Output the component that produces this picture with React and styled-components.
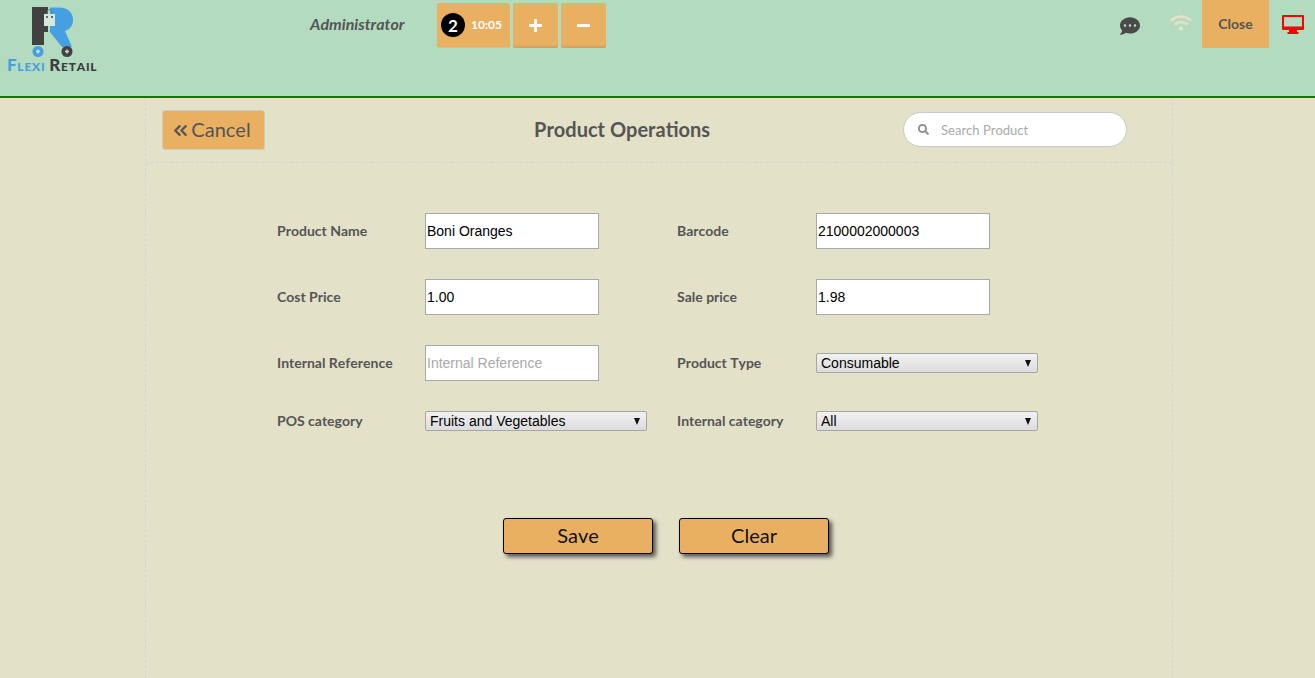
import React from 'react';
import styled, {createGlobalStyle} from 'styled-components';
import {FaCommentDots, FaMinus, FaPlus, FaSearch, FaWifi} from 'react-icons/fa';
import {ChevronsLeft} from 'lucide-react';

const GlobalStyle = createGlobalStyle`
    html, body {
        margin: 0;
        height: 100%;
        overflow: hidden;
    }
    body {
        background: #e3e1c8;
        font-family: Lato, "Liberation Sans", sans-serif;
        font-kerning: none;
        color: #555;
    }
    * {
        box-sizing: border-box;
    }
    button {
        font-kerning: none;
    }
`;

const Page = styled.div`
    height: 678px;
    display: flex;
    flex-direction: column;
`;

const Header = styled.header`
    height: 98px;
    flex: none;
    display: flex;
    align-items: flex-start;
    background: #b2dbbf;
    border-bottom: 2px solid #008000;
`;

const Logo = styled.div`
    width: 92px;
    height: 72px;
    margin: 5px 0 0 7px;
    display: flex;
    flex-direction: column;
    align-items: flex-start;
`;

const LogoText = styled.div`
    display: flex;
    gap: 4px;
    margin: -1px 0 0;
    font-size: 17px;
    line-height: 15px;
    font-weight: 900;
    font-variant: small-caps;
    letter-spacing: 0.75px;
    white-space: nowrap;
`;

const LogoWord = styled.span`
    color: ${({$blue}) => ($blue ? '#4a9fdc' : '#3d3d3d')};
`;

const UserName = styled.div`
    width: 127px;
    height: 48px;
    margin-left: 211px;
    padding-bottom: 2px;
    display: flex;
    align-items: center;
    font-size: 16px;
    font-weight: 700;
    font-style: italic;
    color: #555;
`;

const OrderTab = styled.div`
    width: 73px;
    height: 45px;
    margin-top: 3px;
    padding: 0 8px 0 4px;
    display: flex;
    align-items: center;
    justify-content: space-between;
    background: #eab062;
    border-radius: 2px;
    border-bottom: 1px solid #e6b98a;
`;

const OrderBadge = styled.span`
    width: 24px;
    height: 24px;
    display: flex;
    align-items: center;
    justify-content: center;
    border-radius: 50%;
    background: #000;
    color: #fff;
    font-size: 17px;
    font-weight: 700;
`;

const OrderTime = styled.span`
    color: #fff;
    font-size: 12px;
    font-weight: 700;
    margin-bottom: 2px;
`;

const TabButton = styled.button`
    width: 45px;
    height: 45px;
    margin: 3px 0 0 3px;
    padding: 0;
    display: flex;
    align-items: center;
    justify-content: center;
    background: #eab062;
    color: #fff;
    border: none;
    border-radius: 2px;
    box-shadow: inset 0 -3px 2px -1px #d3a05c;
    font-size: 15px;
`;

const StatusArea = styled.div`
    margin-left: auto;
    height: 48px;
    display: flex;
    align-items: center;
`;

const ChatIcon = styled(FaCommentDots)`
    width: 20px;
    height: 20px;
    color: #4a4a4a;
    margin-top: 3px;
`;

const WifiIcon = styled(FaWifi)`
    width: 22px;
    height: 18px;
    margin: 0 10px 2px 30px;
    color: #e3e1c8;
`;

const CloseButton = styled.button`
    width: 67px;
    height: 48px;
    padding: 0 0 2px;
    background: #eab062;
    border: none;
    color: #555;
    font-family: inherit;
    font-size: 14px;
    font-weight: 700;
`;

const MonitorSvg = styled.svg`
    width: 22px;
    height: 19px;
    margin: 0 11px 0 13px;
    fill: #f00;
`;

const Content = styled.main`
    width: 1028px;
    flex: 1;
    margin-left: 145px;
    border-left: 1px dashed #d3d4d4;
    border-right: 1px dashed #d3d4d4;
`;

const Toolbar = styled.div`
    height: 65px;
    padding: 12px 45px 0 16px;
    display: flex;
    align-items: flex-start;
    border-bottom: 1px dashed #d3d4d4;
`;

const CancelButton = styled.button`
    width: 103px;
    height: 40px;
    padding: 0 0 2px;
    display: flex;
    align-items: center;
    justify-content: center;
    gap: 5px;
    background: #eab062;
    border: 1px solid #cfcdb8;
    border-radius: 3px;
    color: #555;
    font-family: inherit;
    font-size: 20px;
`;

const CancelIcon = styled(ChevronsLeft)`
    width: 21px;
    height: 21px;
    margin: 2px -5px 0 -6px;
    stroke-width: 2.6;
`;

const Title = styled.h1`
    margin: 0 0 0 269px;
    height: 38px;
    display: flex;
    align-items: center;
    font-size: 20px;
    font-weight: 700;
    color: #555;
`;

const SearchBox = styled.label`
    position: relative;
    width: 224px;
    height: 35px;
    margin: 2px 0 0 auto;
    display: block;
`;

const SearchIcon = styled(FaSearch)`
    position: absolute;
    left: 15px;
    top: 12px;
    width: 11px;
    height: 11px;
    color: #888;
`;

const SearchInput = styled.input`
    display: block;
    width: 100%;
    height: 100%;
    padding: 0 12px 0 37px;
    background: #fff;
    border: 1px solid #c8c8c8;
    border-radius: 18px;
    outline: none;
    font-family: inherit;
    font-kerning: none;
    font-size: 13px;
    &::placeholder {
        color: #aaa;
        opacity: 1;
    }
`;

const FormGrid = styled.form`
    margin: 50px 0 0 131px;
    display: grid;
    grid-template-columns: 148px 252px 139px 222px;
    row-gap: 30px;
    align-items: center;
`;

const FieldLabel = styled.label`
    padding-bottom: 2px;
    font-size: 14px;
    font-weight: 700;
    color: #555;
`;

const TextField = styled.input`
    width: 174px;
    height: 36px;
    padding: 1px;
    background: #fff;
    border: 1px solid #a9a9a9;
    border-radius: 0;
    outline: none;
    color: #000;
    font-family: "Liberation Sans", Arial, sans-serif;
    font-size: 14px;
    &::placeholder {
        color: #a9a9a9;
        opacity: 1;
    }
`;

const SelectWrap = styled.div`
    position: relative;
    width: 222px;
    height: 20px;
    &::after {
        content: '';
        position: absolute;
        right: 7px;
        top: 7px;
        border-left: 3.5px solid transparent;
        border-right: 3.5px solid transparent;
        border-top: 7px solid #111;
        pointer-events: none;
    }
`;

const SelectField = styled.select`
    display: block;
    width: 100%;
    height: 100%;
    padding: 0 0 0 4px;
    appearance: none;
    background: linear-gradient(#f2f2f2, #dcdcdc);
    border: 1px solid #a6a6a6;
    border-radius: 2px;
    outline: none;
    color: #000;
    font-family: "Liberation Sans", Arial, sans-serif;
    font-size: 14px;
`;

const Actions = styled.div`
    margin: 87px 0 0 357px;
    display: flex;
    gap: 26px;
`;

const ActionButton = styled.button`
    width: 150px;
    height: 36px;
    padding: 0 0 2px;
    background: #eab062;
    border: 1px solid #000;
    border-radius: 3px;
    box-shadow: 3px 3px 4px #555;
    color: #111;
    font-family: inherit;
    font-size: 20px;
`;

const rows = [
    [
        {label: 'Product Name', value: 'Boni Oranges'},
        {label: 'Barcode', value: '2100002000003'},
    ],
    [
        {label: 'Cost Price', value: '1.00'},
        {label: 'Sale price', value: '1.98'},
    ],
    [
        {label: 'Internal Reference', placeholder: 'Internal Reference'},
        {label: 'Product Type', options: ['Consumable', 'Service', 'Stockable Product']},
    ],
    [
        {label: 'POS category', options: ['Fruits and Vegetables', 'Drinks']},
        {label: 'Internal category', options: ['All', 'Saleable']},
    ],
];

function LogoMark() {
    return (
        <svg width="70" height="53" viewBox="0 0 70 53">
            <path d="M25 2h16v25h-4v13H25z" fill="#414141"/>
            <path d="M43 2.500h9c9 0 14 5 14 12.500 0 6-3 9-8 11l7 16h-10L43 27z" fill="#469fe0"/>
            <path d="M37 9h11v12H37z" fill="#d6e8dd"/>
            <path d="M40 9c0-6 5-6 5 0" fill="none" stroke="#5f7f8f" strokeWidth="1"/>
            <circle cx="40" cy="12" r="1" fill="#3d3d3d"/>
            <circle cx="45" cy="12" r="1" fill="#3d3d3d"/>
            <circle cx="31" cy="46.500" r="5.500" fill="#469fe0"/>
            <path d="M29 46.500h4M31 44.500v4" stroke="#cfe3ea" strokeWidth="1.500"/>
            <circle cx="60" cy="46.500" r="5.500" fill="#414141"/>
            <path d="M58 46.500h4M60 44.500v4" stroke="#cfd5d2" strokeWidth="1.500"/>
        </svg>
    );
}

function MonitorIcon() {
    return (
        <MonitorSvg viewBox="0 0 22 19">
            <path fillRule="evenodd" d="M1 0h20a1 1 0 0 1 1 1v13a1 1 0 0 1-1 1h-6v2h1.500v2h-11v-2H7v-2H1a1 1 0 0 1-1-1V1a1 1 0 0 1 1-1zM2 2v9.500h18V2z"/>
        </MonitorSvg>
    );
}

function Field({field}) {
    if (field.options) {
        return (
            <SelectWrap>
                <SelectField aria-label={field.label} defaultValue={field.options[0]}>
                    {field.options.map(option => <option key={option}>{option}</option>)}
                </SelectField>
            </SelectWrap>
        );
    }
    return <TextField aria-label={field.label} defaultValue={field.value} placeholder={field.placeholder}/>;
}

function App() {
    return (
        <Page>
            <GlobalStyle/>
            <Header>
                <Logo>
                    <LogoMark/>
                    <LogoText>
                        <LogoWord $blue>Flexi</LogoWord>
                        <LogoWord>Retail</LogoWord>
                    </LogoText>
                </Logo>
                <UserName>Administrator</UserName>
                <OrderTab>
                    <OrderBadge>2</OrderBadge>
                    <OrderTime>10:05</OrderTime>
                </OrderTab>
                <TabButton aria-label="Add order"><FaPlus/></TabButton>
                <TabButton aria-label="Remove order"><FaMinus/></TabButton>
                <StatusArea>
                    <ChatIcon/>
                    <WifiIcon/>
                    <CloseButton>Close</CloseButton>
                    <MonitorIcon/>
                </StatusArea>
            </Header>
            <Content>
                <Toolbar>
                    <CancelButton><CancelIcon/>Cancel</CancelButton>
                    <Title>Product Operations</Title>
                    <SearchBox>
                        <SearchIcon/>
                        <SearchInput placeholder="Search Product"/>
                    </SearchBox>
                </Toolbar>
                <FormGrid>
                    {rows.flat().map(field => (
                        <React.Fragment key={field.label}>
                            <FieldLabel>{field.label}</FieldLabel>
                            <Field field={field}/>
                        </React.Fragment>
                    ))}
                </FormGrid>
                <Actions>
                    <ActionButton>Save</ActionButton>
                    <ActionButton>Clear</ActionButton>
                </Actions>
            </Content>
        </Page>
    );
}

export default App;
